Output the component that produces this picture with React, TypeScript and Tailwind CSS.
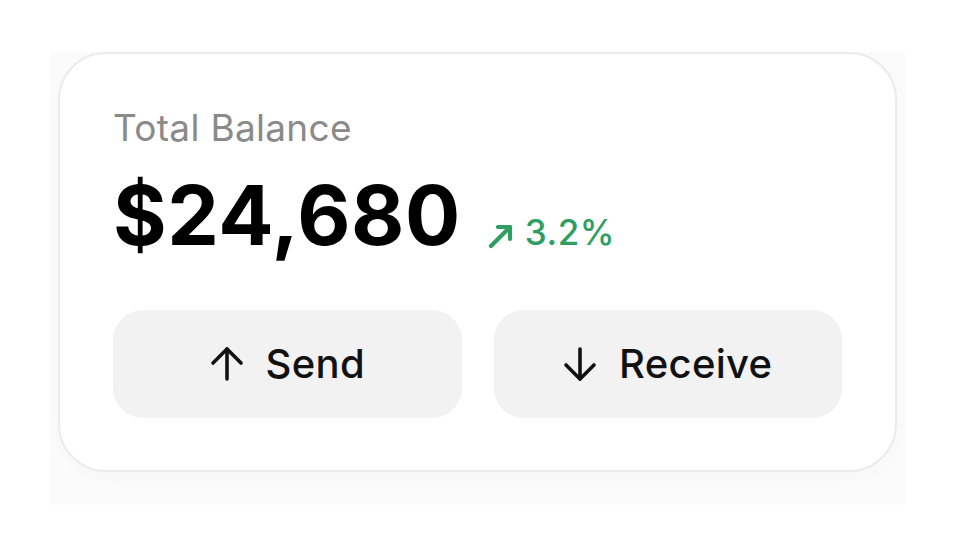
import React from "react";

function ArrowUpRight() {
  return (
    <svg width="28" height="28" viewBox="0 0 28 28" fill="none" stroke="#2f9e62" strokeWidth="4.2" strokeLinecap="round" strokeLinejoin="round">
      <path d="M4 24 L23 5" />
      <path d="M11 5 H23 V17" />
    </svg>
  );
}

function ArrowUp() {
  return (
    <svg width="34" height="36" viewBox="0 0 34 36" fill="none" stroke="#111" strokeWidth="3.6" strokeLinecap="round" strokeLinejoin="round">
      <path d="M17 33 V3" />
      <path d="M3 17 L17 3 L31 17" />
    </svg>
  );
}

function ArrowDown() {
  return (
    <svg width="34" height="36" viewBox="0 0 34 36" fill="none" stroke="#111" strokeWidth="3.6" strokeLinecap="round" strokeLinejoin="round">
      <path d="M17 3 V33" />
      <path d="M3 19 L17 33 L31 19" />
    </svg>
  );
}

export default function App() {
  return (
    <div className="min-h-[558px] w-[955px] bg-white" style={{ fontFamily: "Inter, 'Noto Sans', sans-serif" }}>
      <div className="pl-[50px] pt-[52px]">
        <div className="w-[855px] bg-[#fbfbfb] px-[8px] pb-[33px]">
          <div className="h-[420px] w-[839px] rounded-[48px] border-2 border-[#ebebeb] bg-white px-[53px] pt-[52px] shadow-[0_6px_20px_rgba(0,0,0,0.02)]">
            <div className="text-[37px] leading-[44px] tracking-[0.3px] text-[#8a8a8a]">Total Balance</div>
            <div className="mt-[26px] flex items-baseline">
              <span className="text-[82px] font-bold leading-[80px] tracking-[0.6px] text-black">$24,680</span>
              <span className="ml-[26px] flex items-baseline text-[35px] font-medium tracking-[0.5px] text-[#2f9e62]">
                <span className="mr-[10px] self-center translate-y-[4px]"><ArrowUpRight /></span>
                3.2%
              </span>
            </div>
            <div className="mt-[51px] flex gap-[32px]">
              <button className="flex h-[108px] w-[349px] items-center justify-center gap-[22px] rounded-[30px] bg-[#f2f2f2] text-[40px] font-medium tracking-[0.3px] text-[#111]">
                <ArrowUp />
                <span>Send</span>
              </button>
              <button className="flex h-[108px] w-[349px] items-center justify-center gap-[22px] rounded-[30px] bg-[#f2f2f2] text-[40px] font-medium tracking-[0.3px] text-[#111]">
                <ArrowDown />
                <span>Receive</span>
              </button>
            </div>
          </div>
        </div>
      </div>
    </div>
  );
}
